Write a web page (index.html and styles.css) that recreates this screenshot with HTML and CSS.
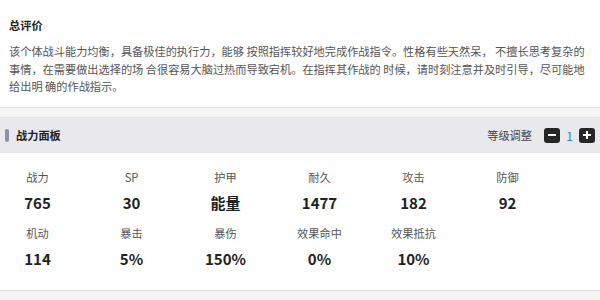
FILE: index.html
```html
<!DOCTYPE html>
<html lang="zh-CN">
<head>
<meta charset="utf-8">
<link rel="stylesheet" href="styles.css">
</head>
<body>
<section class="review">
  <h2 class="review-title">总评价</h2>
  <p class="review-text">该个体战斗能力均衡，具备极佳的执行力，能够 按照指挥较好地完成作战指令。性格有些天然呆， 不擅长思考复杂的<br>事情，在需要做出选择的场 合很容易大脑过热而导致宕机。在指挥其作战的 时候，请时刻注意并及时引导，尽可能地<br>给出明 确的作战指示。</p>
</section>
<div class="spacer"></div>
<section class="panel">
  <header class="panel-head">
    <div class="panel-title"><span class="bar"></span>战力面板</div>
    <div class="level">
      <span class="level-label">等级调整</span>
      <button class="btn" aria-label="minus"><svg width="10" height="10" viewBox="0 0 10 10"><rect x="1" y="4" width="8" height="2" fill="#fff"/></svg></button>
      <span class="level-num">1</span>
      <button class="btn" aria-label="plus"><svg width="10" height="10" viewBox="0 0 10 10"><rect x="1" y="4" width="8" height="2" fill="#fff"/><rect x="4" y="1" width="2" height="8" fill="#fff"/></svg></button>
    </div>
  </header>
  <div class="stats">
    <div class="stat"><div class="label">战力</div><div class="value">765</div></div>
    <div class="stat"><div class="label">SP</div><div class="value">30</div></div>
    <div class="stat"><div class="label">护甲</div><div class="value">能量</div></div>
    <div class="stat"><div class="label">耐久</div><div class="value">1477</div></div>
    <div class="stat"><div class="label">攻击</div><div class="value">182</div></div>
    <div class="stat"><div class="label">防御</div><div class="value">92</div></div>
    <div class="stat"><div class="label">机动</div><div class="value">114</div></div>
    <div class="stat"><div class="label">暴击</div><div class="value">5%</div></div>
    <div class="stat"><div class="label">暴伤</div><div class="value">150%</div></div>
    <div class="stat"><div class="label">效果命中</div><div class="value">0%</div></div>
    <div class="stat"><div class="label">效果抵抗</div><div class="value">10%</div></div>
  </div>
</section>
<div class="footer-band"></div>
</body>
</html>
```
FILE: styles.css
```css
* { box-sizing: border-box; }
html, body {
  margin: 0;
  padding: 0;
  background: #fff;
  font-family: "Noto Sans CJK SC", "Noto Sans", sans-serif;
  font-size: 11.2px;
  color: #333;
}
.review {
  padding: 16px 9px 11px;
  border-bottom: 1px solid #e2e2e2;
}
.review-title {
  margin: 0;
  font-size: 11.2px;
  line-height: 18px;
  font-weight: bold;
  color: #222;
}
.review-text {
  margin: 9px 0 0;
  line-height: 17.6px;
  color: #555;
  white-space: nowrap;
}
.spacer {
  height: 10px;
  background: #f5f5f6;
  border-bottom: 1px solid #e4e4e6;
}
.panel-head {
  height: 35px;
  background: #e8e8ed;
  display: flex;
  align-items: center;
  justify-content: space-between;
  padding: 0 5px;
}
.panel-title {
  display: flex;
  align-items: center;
  gap: 7px;
  font-weight: bold;
  color: #222;
}
.bar {
  width: 4px;
  height: 13px;
  border-radius: 2px;
  background: #8a91a8;
}
.level {
  display: flex;
  align-items: center;
}
.level-label {
  color: #444;
  margin-right: 12px;
}
.btn {
  width: 16px;
  height: 15px;
  padding: 0;
  border: none;
  border-radius: 3px;
  background: #262626;
  display: flex;
  align-items: center;
  justify-content: center;
}
.level-num {
  color: #2d7be0;
  width: 19px;
  text-align: center;
  font-size: 12px;
}
.stats {
  display: grid;
  grid-template-columns: repeat(6, 75px);
  column-gap: 19px;
  row-gap: 11px;
  padding: 16px 0 20px;
  border-bottom: 1px solid #e2e2e2;
}
.stat {
  text-align: center;
}
.label {
  line-height: 16px;
  color: #555;
}
.value {
  margin-top: 7px;
  line-height: 22px;
  font-size: 15px;
  font-weight: bold;
  color: #222;
}
.footer-band {
  height: 20px;
  background: #f4f4f5;
}
```
